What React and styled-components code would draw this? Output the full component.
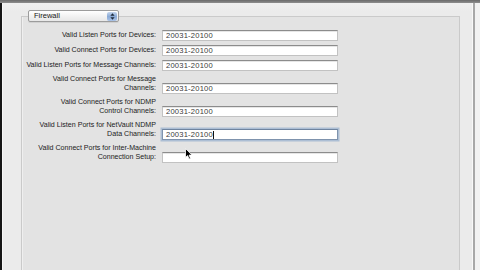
import React from "react";
import styled, { createGlobalStyle } from "styled-components";

const Global = createGlobalStyle`
  html, body { margin: 0; padding: 0; background: #ececec; overflow: hidden; }
  * { box-sizing: border-box; }
`;

const Window = styled.div`
  position: relative;
  width: 480px;
  height: 270px;
  display: flex;
  flex-direction: column;
  background: #ececec;
  font-family: "Liberation Sans", Arial, sans-serif;
`;

const TopStrip = styled.div`
  height: 3px;
  flex: none;
  background: linear-gradient(#6a6a6a, #8e8e8e);
`;

const Body = styled.div`
  flex: 1;
  display: flex;
  min-height: 0;
`;

const LeftEdge = styled.div`
  width: 2px;
  flex: none;
  background: #151515;
`;

const Panel = styled.div`
  flex: 1;
  display: flex;
  flex-direction: column;
  padding: 7px 12px 0 18px;
  background: linear-gradient(#efefef 0, #ebebeb 8px, #ebebeb);
  border-left: 1px solid #f6f6f6;
`;

const RightEdge = styled.div`
  width: 8px;
  flex: none;
  border-left: 1px solid #f8f8f8;
  display: flex;
  &::before {
    content: "";
    width: 2px;
    background: #a8a8a8;
  }
  &::after {
    content: "";
    flex: 1;
    background: #f2f2f2;
  }
`;

const Group = styled.fieldset`
  flex: 1;
  margin: 0;
  padding: 8px 0 0 0;
  border: 1px solid #cacaca;
  border-bottom: none;
  background: #e3e3e3;
  box-shadow: inset 1px 0 0 #efefef;
  min-width: 0;
`;

const Legend = styled.legend`
  margin-left: 6px;
  padding: 0;
`;

const Popup = styled.div`
  width: 91px;
  height: 12px;
  display: flex;
  align-items: center;
  border: 1px solid #9c9c9c;
  border-radius: 2px;
  background: linear-gradient(#ffffff, #f0f0f0 60%, #e8e8e8);
  box-shadow: 0 1px 0 rgba(0, 0, 0, 0.08);
`;

const PopupText = styled.span`
  flex: 1;
  padding-left: 5px;
  font-size: 7.5px;
  line-height: 10px;
  color: #161616;
`;

const Stepper = styled.div`
  width: 10px;
  height: 9px;
  margin-right: 1px;
  border-radius: 2px;
  background: linear-gradient(#c4d6ee, #8aaad6 50%, #a9c2e6);
  display: flex;
  align-items: center;
  justify-content: center;
`;

const Form = styled.div`
  display: grid;
  grid-template-columns: 134px 176px;
  column-gap: 6px;
  row-gap: 4px;
  align-items: end;
`;

const Label = styled.div`
  text-align: right;
  font-size: 7.1px;
  line-height: 9px;
  padding-bottom: 1px;
  color: #222;
  white-space: nowrap;
`;

const Field = styled.div`
  height: 11px;
  display: flex;
  align-items: center;
  padding-left: 3px;
  background: #ffffff;
  border: 1px solid ${(p) => (p.$focused ? "#7f93ad" : "#c2c2c2")};
  border-top-color: ${(p) => (p.$focused ? "#6f84a0" : "#8c8c8c")};
  box-shadow: ${(p) =>
    p.$focused ? "0 0 0 1.5px rgba(128, 160, 200, 0.55)" : "inset 0 1px 0 #e6e6e6"};
  font-size: 7.6px;
  letter-spacing: 0.2px;
  color: #3a3a3a;
  white-space: nowrap;
`;

const Caret = styled.span`
  display: inline-block;
  width: 1px;
  height: 8px;
  margin-left: 0.5px;
  background: #111;
`;

const Cursor = styled.svg`
  position: absolute;
  left: 185px;
  top: 148px;
`;

const rows = [
  { label: ["Valid Listen Ports for Devices:"], value: "20031-20100" },
  { label: ["Valid Connect Ports for Devices:"], value: "20031-20100" },
  { label: ["Valid Listen Ports for Message Channels:"], value: "20031-20100" },
  { label: ["Valid Connect Ports for Message", "Channels:"], value: "20031-20100" },
  { label: ["Valid Connect Ports for NDMP", "Control Channels:"], value: "20031-20100" },
  { label: ["Valid Listen Ports for NetVault NDMP", "Data Channels:"], value: "20031-20100", focused: true },
  { label: ["Valid Connect Ports for Inter-Machine", "Connection Setup:"], value: "" },
];

export default function App() {
  return (
    <>
      <Global />
      <Window>
        <TopStrip />
        <Body>
          <LeftEdge />
          <Panel>
            <Group>
              <Legend>
                <Popup>
                  <PopupText>Firewall</PopupText>
                  <Stepper>
                    <svg width="5" height="7" viewBox="0 0 5 7">
                      <path d="M2.5 0.3 L4.6 2.8 L0.4 2.8 Z" fill="#1e2a3a" />
                      <path d="M2.5 6.7 L4.6 4.2 L0.4 4.2 Z" fill="#1e2a3a" />
                    </svg>
                  </Stepper>
                </Popup>
              </Legend>
              <Form>
                {rows.map((r, i) => (
                  <React.Fragment key={i}>
                    <Label>
                      {r.label.map((l, j) => (
                        <div key={j}>{l}</div>
                      ))}
                    </Label>
                    <Field $focused={r.focused}>
                      {r.value}
                      {r.focused && <Caret />}
                    </Field>
                  </React.Fragment>
                ))}
              </Form>
            </Group>
          </Panel>
          <RightEdge />
        </Body>
        <Cursor width="8" height="12" viewBox="0 0 8 12">
          <path
            d="M0.5 0.5 L0.5 9.5 L2.6 7.6 L4.1 11 L5.5 10.4 L4.1 7.1 L7 7.1 Z"
            fill="#000"
            stroke="#fff"
            strokeWidth="0.8"
          />
        </Cursor>
      </Window>
    </>
  );
}
